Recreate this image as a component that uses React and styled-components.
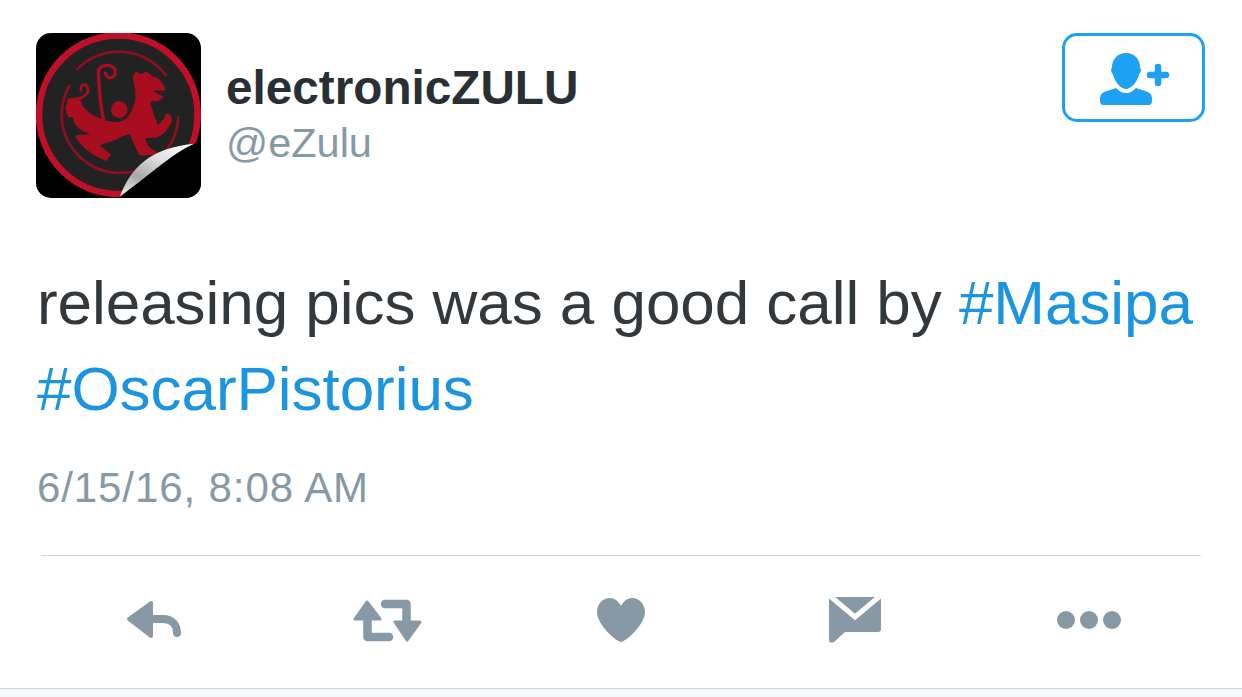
import React from "react";
import styled, { createGlobalStyle } from "styled-components";

const Global = createGlobalStyle`
html, body {
    margin: 0;
    padding: 0;
    background: #fff;
    font-family: "Liberation Sans", Arial, sans-serif;
}
`;

const Page = styled.div`
width: 1242px;
height: 697px;
display: flex;
flex-direction: column;
overflow: hidden;
`;

const Tweet = styled.article`
flex: 1;
display: flex;
flex-direction: column;
padding: 33px 37px 0 36px;
`;

const Header = styled.header`
display: flex;
align-items: flex-start;
`;

const Avatar = styled.div`
width: 165px;
height: 165px;
flex: none;
border-radius: 15px;
overflow: hidden;
background: #000;
svg {
    display: block;
    filter: blur(0.5px);
}
`;

const Names = styled.div`
flex: 1;
padding: 29px 0 0 25px;
`;

const Name = styled.div`
font-size: 47.7px;
line-height: 52px;
font-weight: 700;
color: #292f33;
`;

const Handle = styled.div`
margin-top: 7px;
font-size: 41.5px;
line-height: 44px;
color: #8899a6;
`;

const FollowButton = styled.button`
width: 143px;
height: 89px;
padding: 3px 0 0 3px;
display: flex;
align-items: center;
justify-content: center;
background: #fff;
border: 3px solid #1da1f2;
border-radius: 15px;
`;

const Body = styled.p`
margin: 62px 0 0 1px;
font-size: 62px;
line-height: 86px;
letter-spacing: -0.05px;
color: #32383c;
`;

const Tag = styled.a`
color: #1b95e0;
`;

const Stamp = styled.div`
margin: 28px 0 0 1px;
font-size: 42px;
line-height: 56px;
letter-spacing: 0.9px;
color: #8899a6;
`;

const Divider = styled.hr`
margin: 39px 4px 0 5px;
border: 0;
height: 1px;
background: #ccd6dd;
`;

const Actions = styled.nav`
flex: 1;
display: flex;
align-items: center;
margin-left: 1px;
padding-bottom: 4px;
`;

const Action = styled.div`
flex: 1;
display: flex;
justify-content: center;
svg {
    display: block;
}
`;

const Dots = styled.div`
display: flex;
gap: 5px;
margin-left: 1px;
span {
    width: 18px;
    height: 18px;
    border-radius: 50%;
    background: #8899a6;
}
`;

const Strip = styled.div`
height: 8px;
flex: none;
background: #f5f8fa;
border-top: 1px solid #ccd6dd;
`;

const StickerLogo = () => (
    <svg width="165" height="165" viewBox="48 40 495 495">
        <defs>
            <linearGradient id="curl" x1="0.9" y1="0" x2="0.1" y2="1">
                <stop offset="0" stopColor="#ffffff" />
                <stop offset="0.35" stopColor="#e2e2e2" />
                <stop offset="0.7" stopColor="#a8a8a8" />
                <stop offset="1" stopColor="#e8e8e8" />
            </linearGradient>
        </defs>
        <circle cx="295" cy="285" r="238" fill="#222" stroke="#c01029" strokeWidth="20" />
        <path d="M170 150 A176 176 0 0 1 440 170 M475 290 A176 176 0 0 1 300 460 A176 176 0 0 1 125 280 A176 176 0 0 1 150 195" fill="none" stroke="#8e0f20" strokeWidth="8" />
        <circle cx="298" cy="270" r="25" fill="#a80d20" />
        <path
            fill="#a80d20"
            stroke="#a80d20"
            strokeWidth="7"
            strokeLinejoin="round"
            d="M342 172 L350 160 L362 168 L378 160 L395 172 L412 178 L428 198 L432 210 L410 208 L392 212 L405 222 L426 232 L412 242 L392 240 L388 252 C394 275 402 298 412 322 C424 312 436 302 440 285 L450 290 L452 304 C445 322 430 340 412 350 L372 352 C374 368 382 384 392 390 L412 402 L362 404 C350 385 340 362 332 338 L304 348 L272 362 L232 375 L268 405 L258 420 C230 410 190 385 170 350 L230 345 C205 340 180 330 168 312 L160 288 L148 290 L140 268 L146 240 L176 236 C182 262 200 285 236 298 C262 310 300 318 322 298 C342 278 352 245 350 215Z"
        />
        <g fill="none" stroke="#a80d20" strokeLinecap="round">
            <path d="M250 298 C238 240 238 195 235 160 C235 130 282 130 286 155 C288 178 258 180 256 160" strokeWidth="10" />
            <path d="M160 240 C190 236 212 222 202 202 C195 188 180 196 183 212" strokeWidth="8" />
        </g>
        <path d="M296 540 C340 480 400 410 522 372 L560 340 V540Z" fill="#000" />
        <path d="M300 530 C330 450 385 385 522 372 C450 405 385 470 300 530Z" fill="url(#curl)" />
    </svg>
);

const FollowIcon = () => (
    <svg width="72" height="54" viewBox="0 0 72 54" fill="#1da1f2">
        <path d="M27 1C36 1 41 8 41 15L42 18C42 20 40 22 40 23C38 30 32 37 27 37C22 37 16 30 14 23C14 22 12 20 12 18L13 15C13 8 18 1 27 1Z" />
        <path d="M1 47C1 42 4 40 8 39L17 36C20 39 23 41 27 41C31 41 34 39 37 36L46 39C50 40 53 42 53 47V49C53 51 52 53 50 53H4C2 53 1 51 1 49Z" />
        <path d="M51 23H67M59 15V31" fill="none" stroke="#1da1f2" strokeWidth="6.5" strokeLinecap="round" />
    </svg>
);

const ReplyIcon = () => (
    <svg width="56" height="40" viewBox="-1 0 56 40" fill="none" stroke="#8899a6" strokeLinecap="round" strokeLinejoin="round">
        <path d="M2 19L24 3V36Z" fill="#8899a6" strokeWidth="4" />
        <path d="M24 19H36C45 19 50 25 50 33" strokeWidth="8" />
    </svg>
);

const RetweetIcon = () => (
    <svg width="69" height="43" viewBox="0 0 69 43" fill="none" stroke="#8899a6" strokeLinejoin="round">
        <path d="M14 3L2 20H27Z" fill="#8899a6" strokeWidth="3" />
        <path d="M54 41L42 23H67Z" fill="#8899a6" strokeWidth="3" />
        <path d="M14.5 20V38H36" strokeWidth="8.5" strokeLinecap="round" />
        <path d="M32 5H53.5V22" strokeWidth="8.5" strokeLinecap="round" />
    </svg>
);

const HeartIcon = () => (
    <svg width="48" height="44" viewBox="0 0 48 44" fill="#8899a6">
        <path d="M24 44C20 44 0 27 0 14C0 6 6 0 13 0C18 0 22 4 24 8C26 4 30 0 35 0C42 0 48 6 48 14C48 27 28 44 24 44Z" />
    </svg>
);

const MessageIcon = () => (
    <svg width="52" height="46" viewBox="0 0 52 46">
        <path d="M2 0H50C51 0 52 1 52 2V32C52 34 51 35 49 35H16L5 45C3 46 0 46 0 43V2C0 1 1 0 2 0Z" fill="#8899a6" />
        <path d="M1 -1L26 20L51 -1" fill="none" stroke="#fff" strokeWidth="5" />
    </svg>
);

const App = () => (
    <Page>
        <Global />
        <Tweet>
            <Header>
                <Avatar><StickerLogo /></Avatar>
                <Names>
                    <Name>electronicZULU</Name>
                    <Handle>@eZulu</Handle>
                </Names>
                <FollowButton><FollowIcon /></FollowButton>
            </Header>
            <Body>
                releasing pics was a good call by <Tag>#Masipa</Tag> <Tag>#OscarPistorius</Tag>
            </Body>
            <Stamp>6/15/16, 8:08 AM</Stamp>
            <Divider />
            <Actions>
                <Action><ReplyIcon /></Action>
                <Action><RetweetIcon /></Action>
                <Action><HeartIcon /></Action>
                <Action><MessageIcon /></Action>
                <Action><Dots><span /><span /><span /></Dots></Action>
            </Actions>
        </Tweet>
        <Strip />
    </Page>
);

export default App;
